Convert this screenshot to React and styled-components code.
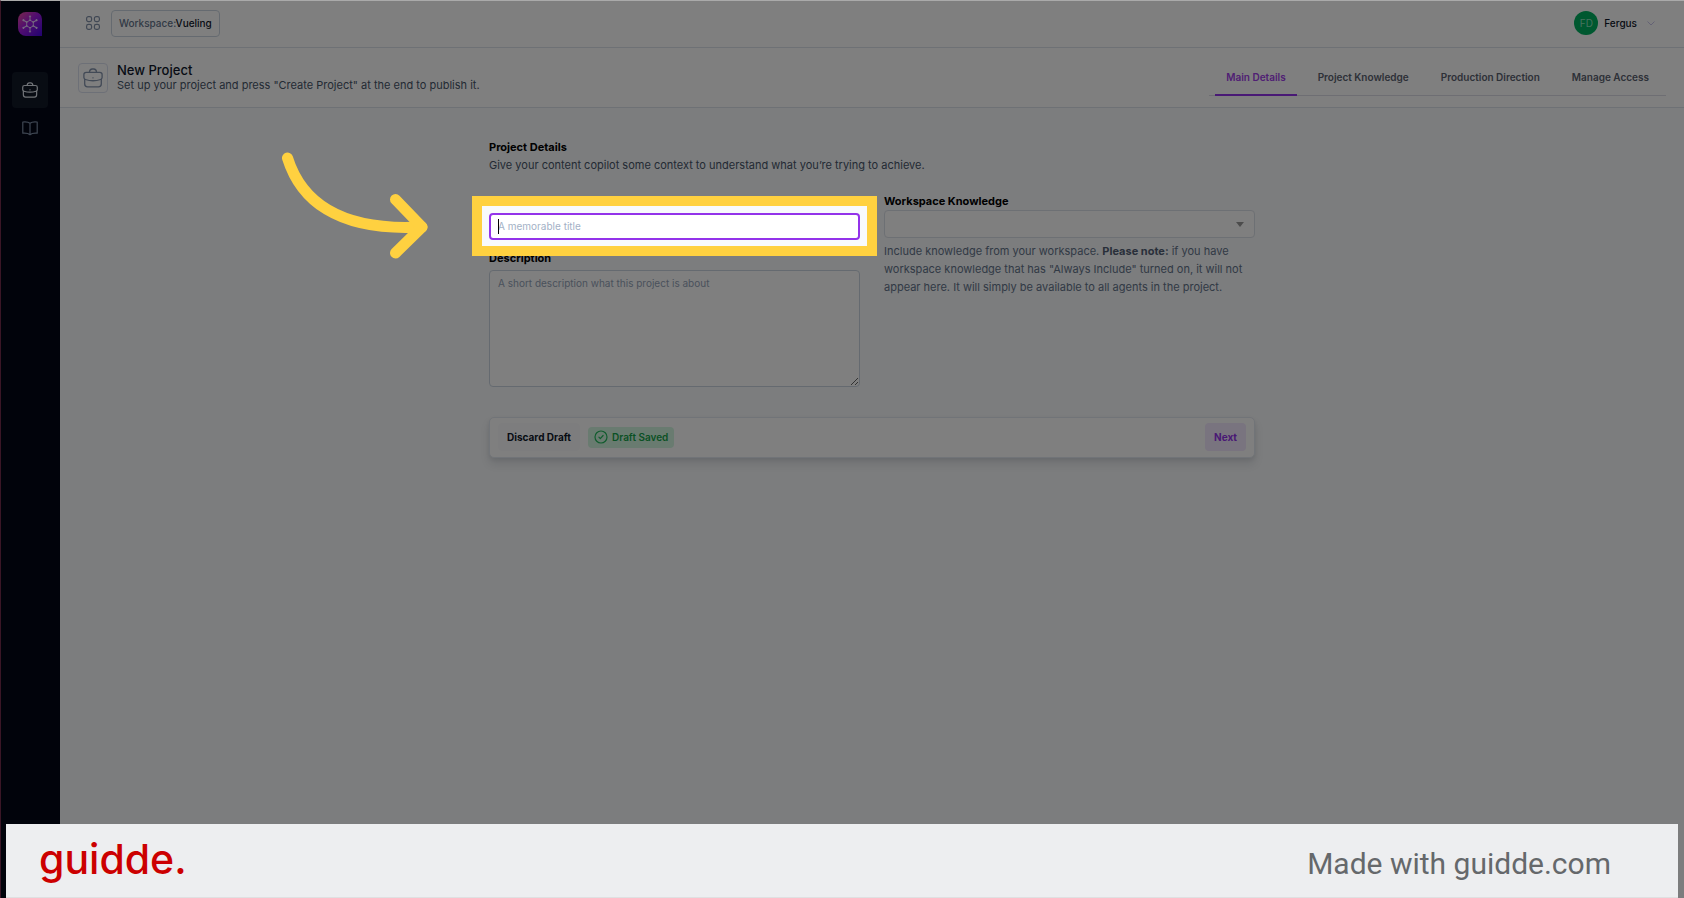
import React from "react";
import styled, { createGlobalStyle } from "styled-components";

const GlobalStyle = createGlobalStyle`
  *, *::before, *::after { box-sizing: border-box; }
  body {
    margin: 0;
    background: #f8fafc;
    font-family: Inter, "Liberation Sans", sans-serif;
    font-size: 11px;
    color: #0f172a;
  }
  h1, h2, p { margin: 0; }
  button, input, select, textarea { font: inherit; color: inherit; }
`;

const Page = styled.div`
  display: flex;
  min-height: 100vh;
  overflow: hidden;
  border-top: 1px solid #aaaaaa;
  border-left: 1px solid #3a1626;
`;

const Sidebar = styled.aside`
  flex: 0 0 59px;
  display: flex;
  flex-direction: column;
  align-items: center;
  gap: 36px;
  padding: 11px 1px 0 0;
  background: #020617;
`;

const SideNav = styled.nav`
  display: flex;
  flex-direction: column;
  gap: 2px;
`;

const SideLink = styled.a`
  display: grid;
  place-items: center;
  width: 36px;
  height: 36px;
  border-radius: 4px;
  color: ${(p) => (p.$active ? "#e2e8f0" : "#7e8ea6")};
  background: ${(p) => (p.$active ? "#111827" : "transparent")};
`;

const Main = styled.div`
  flex: 1;
  min-width: 0;
  display: flex;
  flex-direction: column;
`;

const Bar = styled.header`
  display: flex;
  align-items: center;
  justify-content: space-between;
  background: #ffffff;
  border-bottom: 1px solid #dde2ea;
`;

const TopBar = styled(Bar)`
  height: 47px;
  padding: 0 29px 2px 26px;
`;

const TitleBar = styled(Bar)`
  height: 60px;
  padding: 0 18px;
`;

const Group = styled.div`
  display: flex;
  align-items: center;
  gap: ${(p) => p.$gap}px;
`;

const WorkspaceButton = styled.button`
  height: 27px;
  padding: 0 7px;
  border: 1px solid #cbd5e1;
  border-radius: 4px;
  background: #ffffff;
  font-size: 10px;
  font-weight: 500;
  line-height: 16px;
`;

const Muted = styled.span`
  color: #64748b;
`;

const UserButton = styled.button`
  display: flex;
  align-items: center;
  gap: 6px;
  padding: 0;
  border: 0;
  background: none;
  font-size: 10px;
  font-weight: 500;
`;

const Avatar = styled.span`
  display: grid;
  place-items: center;
  width: 24px;
  height: 24px;
  border-radius: 50%;
  background: #00b060;
  color: #8fe3bd;
  font-weight: 400;
`;

const ChevronBox = styled.span`
  display: flex;
  padding-left: 4px;
  color: #c9c4ea;
`;

const ProjectBadge = styled.span`
  display: grid;
  place-items: center;
  width: 30px;
  height: 30px;
  border: 1px solid #dbe0ee;
  border-radius: 4px;
  color: #8594ad;
`;

const Title = styled.h1`
  font-size: 13px;
  line-height: 15px;
  font-weight: 500;
`;

const Subtitle = styled.p`
  line-height: 14px;
  color: #475569;
`;

const Tabs = styled.nav`
  display: flex;
  gap: 10px;
  padding: 0 6px;
  border-bottom: 1px solid #dcdde6;
`;

const Tab = styled.a`
  padding: 0 11px;
  margin-bottom: -1px;
  font-size: 10px;
  line-height: 34px;
  font-weight: 600;
  text-decoration: none;
  color: ${(p) => (p.$active ? "#a040e8" : "#5b6270")};
  border-bottom: 2px solid ${(p) => (p.$active ? "#9333ea" : "transparent")};
`;

const Form = styled.form`
  width: 100%;
  max-width: 766px;
  margin: 0 auto;
  padding-top: 30px;
`;

const SectionTitle = styled.h2`
  font-size: 11px;
  line-height: 18px;
  font-weight: 700;
  color: #000000;
`;

const SectionText = styled.p`
  line-height: 18px;
  color: #475569;
`;

const Columns = styled.div`
  display: grid;
  grid-template-columns: 1fr 1fr;
  gap: 24px;
  margin-top: 18px;
`;

const Field = styled.div`
  display: flex;
  flex-direction: column;
`;

const Label = styled.label`
  line-height: 18px;
  font-weight: 700;
  color: #000000;
`;

const Spotlight = styled.div`
  position: relative;
  margin: 3px 0 9px;

  &::after {
    content: "";
    position: absolute;
    z-index: 1;
    inset: -17px -17px -16px;
    border: 10px solid #ffd140;
    box-shadow: 0 0 0 4000px rgba(0, 0, 0, 0.5);
    pointer-events: none;
  }
`;

const TextInput = styled.input`
  display: block;
  width: 100%;
  height: 27px;
  padding: 0 7px 2px;
  border: 2px solid #9333ea;
  border-radius: 4px;
  background: #ffffff;
  font-size: 10px;
  outline: none;
  &::placeholder { color: #a3b1c6; opacity: 1; }
`;

const Caret = styled.span`
  position: absolute;
  left: 9px;
  top: 6px;
  width: 1px;
  height: 15px;
  background: #000000;
`;

const Arrow = styled.svg`
  position: absolute;
  z-index: 2;
  right: calc(100% + 61px);
  top: -61px;
`;

const TextArea = styled.textarea`
  display: block;
  height: 117px;
  margin-top: 3px;
  padding: 5px 8px;
  border: 1px solid #cbd5e1;
  border-radius: 4px;
  background: #ffffff;
  font-size: 10px;
  line-height: 15px;
  outline: none;
  resize: vertical;
  &::placeholder { color: #94a3b8; opacity: 1; }
`;

const SelectBox = styled.div`
  display: grid;
  align-items: center;
  > * { grid-area: 1 / 1; }
  > svg { justify-self: end; margin-right: 11px; pointer-events: none; }
`;

const Select = styled.select`
  width: 100%;
  height: 28px;
  appearance: none;
  border: 1px solid #dbe0e8;
  border-radius: 4px;
  background: #ffffff;
`;

const Help = styled.p`
  margin-top: 4px;
  line-height: 18px;
  color: #64748b;
  strong { color: #525f75; }
`;

const Actions = styled.div`
  display: flex;
  align-items: center;
  gap: 8px;
  height: 41px;
  margin-top: 30px;
  padding: 0 8px 1px;
  border: 1px solid #e2e8f0;
  border-radius: 5px;
  background: #ffffff;
  box-shadow: 0 6px 10px rgba(15, 23, 42, 0.11), 0 2px 4px rgba(15, 23, 42, 0.07);
`;

const Button = styled.button`
  height: 28px;
  padding: 0 9px;
  border: 0;
  border-radius: 4px;
  font-size: 10px;
  font-weight: 700;
  background: ${(p) => (p.$primary ? "#f3e8ff" : "#fbfbfd")};
  color: ${(p) => (p.$primary ? "#9333ea" : "#0f172a")};
  margin-left: ${(p) => (p.$primary ? "auto" : "0")};
`;

const Status = styled.span`
  display: flex;
  align-items: center;
  gap: 4px;
  height: 21px;
  padding: 0 6px;
  border-radius: 4px;
  background: #d3f7e0;
  color: #16a34a;
  font-size: 10px;
  font-weight: 600;
`;

const Footer = styled.footer`
  position: fixed;
  z-index: 3;
  left: 6px;
  right: 6px;
  bottom: 0;
  display: flex;
  align-items: center;
  justify-content: space-between;
  height: 74px;
  padding: 0 67px 0 33px;
  background: #edeef0;
  border-bottom: 1px solid #dfe0e1;
`;

const Brand = styled.span`
  padding-bottom: 4px;
  font-size: 41px;
  line-height: 48px;
  font-weight: 500;
  color: #cc0000;
`;

const MadeWith = styled.span`
  padding-top: 6px;
  font-family: Roboto, sans-serif;
  font-size: 30px;
  line-height: 36px;
  color: #65686b;
`;

function LogoIcon() {
  const spokes = [0, 60, 120, 180, 240, 300];
  return (
    <svg width="24" height="24" viewBox="0 0 24 24" role="img" aria-label="Home">
      <defs>
        <linearGradient id="logo" x1="0" y1="0" x2="1" y2="1">
          <stop offset="0" stopColor="#f0509a" />
          <stop offset="0.45" stopColor="#a21be0" />
          <stop offset="1" stopColor="#4306e0" />
        </linearGradient>
      </defs>
      <path d="M8 0H17a7 7 0 0 1 7 7V24H8a8 8 0 0 1-8-8V8a8 8 0 0 1 8-8Z" fill="url(#logo)" />
      <g stroke="#e9d5ff" strokeWidth="0.9" fill="#e9d5ff">
        <path d="M12 8.2 15.3 10.1V13.9L12 15.8 8.7 13.9V10.1Z" fill="none" />
        {spokes.map((a) => (
          <g key={a} transform={`rotate(${a} 12 12)`}>
            <path d="M12 8V5" />
            <circle cx="12" cy="4.4" r="0.6" />
            <circle cx="12" cy="8.2" r="0.4" />
          </g>
        ))}
      </g>
    </svg>
  );
}

function BriefcaseIcon({ size, weight }) {
  return (
    <svg width={size} height={size} viewBox="0 0 20 20" fill="none" stroke="currentColor" strokeWidth={weight} strokeLinecap="round" strokeLinejoin="round" aria-hidden="true">
      <path d="M6.4 4.2C6.6 2 7.6 1 9.2 1h1.6c1.6 0 2.6 1 2.8 3.2" />
      <path d="M3.2 4.4h13.6c1.4 0 2.3.8 2.3 2.2v3c0 1-.6 1.6-1.5 1.9-4.8 1.6-10.4 1.6-15.2 0C1.5 11.2.9 10.6.9 9.6v-3c0-1.4.9-2.2 2.3-2.2Z" />
      <path d="M1.7 11.5V16c0 1.800 1 2.800 2.800 2.800h11c1.800 0 2.800-1 2.800-2.800v-4.500" />
      <path d="M9.900 9.800h.2" />
    </svg>
  );
}

function BookIcon() {
  return (
    <svg width="16" height="16" viewBox="0 0 16 16" fill="none" stroke="currentColor" strokeWidth="1.2" strokeLinejoin="round" aria-hidden="true">
      <path d="M8 3.3C6.5 2 3.5 1.7.8 2v11.200C3.500 13 6.500 13.300 8 14.700c1.500-1.400 4.500-1.700 7.200-1.500V2C12.500 1.700 9.500 2 8 3.300ZM8 3.300V14.500" />
    </svg>
  );
}

function GridIcon() {
  return (
    <svg width="14" height="14" viewBox="0 0 14 14" fill="none" stroke="#8291a9" strokeWidth="1.2" aria-hidden="true">
      <rect x="0.6" y="0.6" width="5" height="5" rx="1.8" />
      <rect x="8.4" y="0.6" width="5" height="5" rx="1.8" />
      <rect x="0.6" y="8.4" width="5" height="5" rx="1.8" />
      <rect x="8.4" y="8.4" width="5" height="5" rx="1.8" />
    </svg>
  );
}

export default function App() {
  return (
    <>
      <GlobalStyle />
      <Page>
        <Sidebar>
          <LogoIcon />
          <SideNav>
            <SideLink href="#projects" aria-label="Projects" $active>
              <BriefcaseIcon size={16} weight={1.5} />
            </SideLink>
            <SideLink href="#knowledge" aria-label="Knowledge">
              <BookIcon />
            </SideLink>
          </SideNav>
        </Sidebar>
        <Main>
          <TopBar>
            <Group $gap={11}>
              <GridIcon />
              <WorkspaceButton type="button">
                <Muted>Workspace:</Muted>Vueling
              </WorkspaceButton>
            </Group>
            <UserButton type="button">
              <Avatar>FD</Avatar>
              Fergus
              <ChevronBox>
                <svg width="8" height="5" viewBox="0 0 8 5" fill="none" stroke="currentColor" aria-hidden="true">
                  <path d="M0.5 0.5 4 4 7.5 0.5" />
                </svg>
              </ChevronBox>
            </UserButton>
          </TopBar>
          <TitleBar>
            <Group $gap={9}>
              <ProjectBadge>
                <BriefcaseIcon size={20} weight={1.3} />
              </ProjectBadge>
              <div>
                <Title>New Project</Title>
                <Subtitle>Set up your project and press "Create Project" at the end to publish it.</Subtitle>
              </div>
            </Group>
            <Tabs>
              <Tab href="#details" $active>Main Details</Tab>
              <Tab href="#project-knowledge">Project Knowledge</Tab>
              <Tab href="#direction">Production Direction</Tab>
              <Tab href="#access">Manage Access</Tab>
            </Tabs>
          </TitleBar>
          <Form>
            <SectionTitle>Project Details</SectionTitle>
            <SectionText>Give your content copilot some context to understand what you’re trying to achieve.</SectionText>
            <Columns>
              <Field>
                <Label htmlFor="title">Title</Label>
                <Spotlight>
                  <TextInput id="title" type="text" placeholder="A memorable title" />
                  <Caret />
                  <Arrow width="146" height="107" viewBox="0 0 146 107" fill="none" stroke="#ffd140" strokeWidth="11" strokeLinecap="round" strokeLinejoin="round" aria-hidden="true">
                    <path d="M5.5 6C18 46 53 80 140 75" />
                    <path d="M113.5 47.5 140 75 113.5 101" />
                  </Arrow>
                </Spotlight>
                <Label htmlFor="description">Description</Label>
                <TextArea id="description" placeholder="A short description what this project is about" />
              </Field>
              <Field>
                <Label htmlFor="workspace-knowledge">Workspace Knowledge</Label>
                <SelectBox>
                  <Select id="workspace-knowledge" defaultValue="">
                    <option value="" />
                  </Select>
                  <svg width="8" height="5" viewBox="0 0 8 5" aria-hidden="true">
                    <path d="M0 0H8L4 5Z" fill="#999999" />
                  </svg>
                </SelectBox>
                <Help>
                  Include knowledge from your workspace. <strong>Please note:</strong> if you have workspace
                  knowledge that has "Always Include" turned on, it will not appear here. It will simply be
                  available to all agents in the project.
                </Help>
              </Field>
            </Columns>
            <Actions>
              <Button type="button">Discard Draft</Button>
              <Status>
                <svg width="14" height="14" viewBox="0 0 14 14" fill="none" stroke="#22b85c" strokeWidth="1.2" strokeLinecap="round" strokeLinejoin="round" aria-hidden="true">
                  <circle cx="7" cy="7" r="6" />
                  <path d="M4.9 7.2 6.3 8.6 9.1 5.5" />
                </svg>
                Draft Saved
              </Status>
              <Button type="submit" $primary>Next</Button>
            </Actions>
          </Form>
        </Main>
      </Page>
      <Footer>
        <Brand>guidde.</Brand>
        <MadeWith>Made with guidde.com</MadeWith>
      </Footer>
    </>
  );
}
